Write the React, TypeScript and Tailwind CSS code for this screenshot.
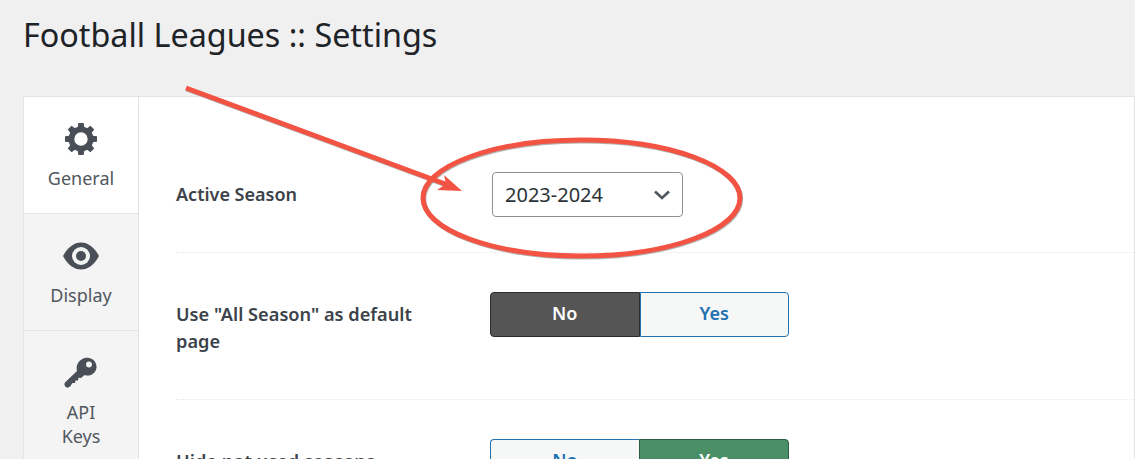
import React from 'react';

const GearIcon = () => (
  <svg width="34" height="34" viewBox="0 0 34 34" fill="#4a4f57">
    {[0, 45, 90, 135, 180, 225, 270, 315].map((deg) => (
      <path key={deg} d="M14.3 1 H19.7 L20.6 8 H13.4 Z" transform={`rotate(${deg} 17 17)`} />
    ))}
    <circle cx="17" cy="17" r="9.6" fill="none" stroke="#4a4f57" strokeWidth="5.8" />
  </svg>
);

const EyeIcon = () => (
  <svg width="36" height="28" viewBox="0 0 36 28" fill="none">
    <path d="M0 14 C5 5 11 0.5 18 0.5 C25 0.5 31 5 36 14 C31 23 25 27.5 18 27.5 C11 27.5 5 23 0 14 Z" fill="#4a4f57" />
    <circle cx="18" cy="14" r="9" fill="#f4f4f4" />
    <circle cx="18" cy="14" r="5" fill="#4a4f57" />
  </svg>
);

const KeyIcon = () => (
  <svg width="34" height="32" viewBox="0 0 34 32" fill="#4a4f57">
    <path d="M21 1 C27 -0.5 33 4 32.5 10.5 C32 16.5 26 20 20.5 18 L17 21 L14.5 20.8 L14 23.5 L11.5 23.5 L11 26 L8.5 26 L6 29.5 C4.5 31 2.5 31 1.2 29.5 C0 28 0.2 26.2 1.5 25 L13 14 C11.5 8 15 2.5 21 1 Z M25 4.5 C23.3 4.5 22 5.8 22 7.5 C22 9.2 23.3 10.5 25 10.5 C26.7 10.5 28 9.2 28 7.5 C28 5.8 26.7 4.5 25 4.5 Z" fillRule="evenodd" />
  </svg>
);

const tabs = [
  { label: 'General', icon: <GearIcon />, active: true },
  { label: 'Display', icon: <EyeIcon />, active: false },
  { label: 'API Keys', icon: <KeyIcon />, active: false },
];

const Toggle = ({ value }: { value: 'no' | 'yes' }) => (
  <div className="flex h-[45px] w-[299px] text-[18px] font-semibold leading-none">
    <div
      className={
        value === 'no'
          ? 'flex flex-1 items-center justify-center rounded-l-[4px] border border-[#2c2c2c] bg-[#555555] pb-[3px] text-white'
          : 'flex flex-1 items-center justify-center rounded-l-[4px] border border-r-0 border-[#2271b1] bg-[#f6f7f7] pb-[3px] text-[#2271b1]'
      }
    >
      No
    </div>
    <div
      className={
        value === 'yes'
          ? 'flex flex-1 items-center justify-center rounded-r-[4px] border border-[#2c5e42] bg-[#4b8f68] pb-[3px] text-white'
          : 'flex flex-1 items-center justify-center rounded-r-[4px] border border-[#2271b1] bg-[#f6f7f7] pb-[3px] text-[#2271b1]'
      }
    >
      Yes
    </div>
  </div>
);

const App: React.FC = () => {
  return (
    <div className="relative h-[459px] overflow-hidden bg-[#f0f0f1] font-['Noto_Sans',sans-serif] text-[#3c434a]">
      <h1 className="h-[96px] pl-[23px] pt-[13px] text-[32.3px] leading-[42px] text-[#1d2327]">
        Football Leagues :: Settings
      </h1>

      <div className="ml-[23px] flex h-[400px] border border-[#e2e4e7] bg-white">
        <div className="w-[115px] shrink-0 border-r border-[#e2e4e7] bg-[#f4f4f4]">
          {tabs.map((tab) => (
            <div
              key={tab.label}
              className={`flex h-[117px] flex-col items-center border-b border-[#e2e4e7] px-7 pt-[25px] text-center text-[18px] leading-[24px] text-[#50575e] last:h-[160px] ${
                tab.active ? 'bg-white' : ''
              }`}
            >
              <div className="flex h-[34px] items-center justify-center">{tab.icon}</div>
              <div className="mt-[10px]">{tab.label}</div>
            </div>
          ))}
        </div>

        <div className="flex-1 pl-[37px]">
          <div className="flex h-[156px] items-center border-b border-dotted border-[#e8e8e8] pt-[40px]">
            <div className="w-[316px] text-[18px] font-semibold leading-[27px] text-[#3c434a]">Active Season</div>
            <div className="flex h-[45px] w-[191px] items-center justify-between rounded-[4px] border border-[#8c8f94] pl-3 pr-[11px] text-[20px] text-[#2c3338]">
              <span>2023-2024</span>
              <svg width="18" height="12" viewBox="0 0 18 12" fill="none" stroke="#50575e" strokeWidth="2.6">
                <path d="M2 2.5 L9 9 L16 2.5" />
              </svg>
            </div>
          </div>

          <div className="flex h-[147px] items-start border-b border-dotted border-[#e8e8e8] pt-[39px]">
            <div className="w-[314px] pr-[60px] pt-[9px] text-[18.2px] font-semibold leading-[27px] text-[#3c434a]">
              Use "All Season" as default page
            </div>
            <Toggle value="no" />
          </div>

          <div className="flex items-start pt-[39px]">
            <div className="w-[314px] pt-[9px] text-[18.2px] font-semibold leading-[27px] text-[#3c434a]">
              Hide not used seasons
            </div>
            <Toggle value="yes" />
          </div>
        </div>
      </div>

      {/* annotation drawn on top of the screenshot */}
      <svg className="pointer-events-none absolute left-0 top-0" width="1135" height="459" fill="none">
        <g stroke="#808080" strokeOpacity="0.6" transform="translate(0.7 1)">
          <path d="M186 88 L448 185" strokeWidth="5" />
          <ellipse cx="581.5" cy="198" rx="158.5" ry="58" strokeWidth="5" />
        </g>
        <path d="M186 88 L448 185" stroke="#f25342" strokeWidth="5" />
        <path d="M444 175 L462 191 L437 190 L446 184 Z" fill="#f25342" />
        <ellipse cx="581.5" cy="198" rx="158.5" ry="58" stroke="#f25342" strokeWidth="5" />
      </svg>
    </div>
  );
};

export default App;
